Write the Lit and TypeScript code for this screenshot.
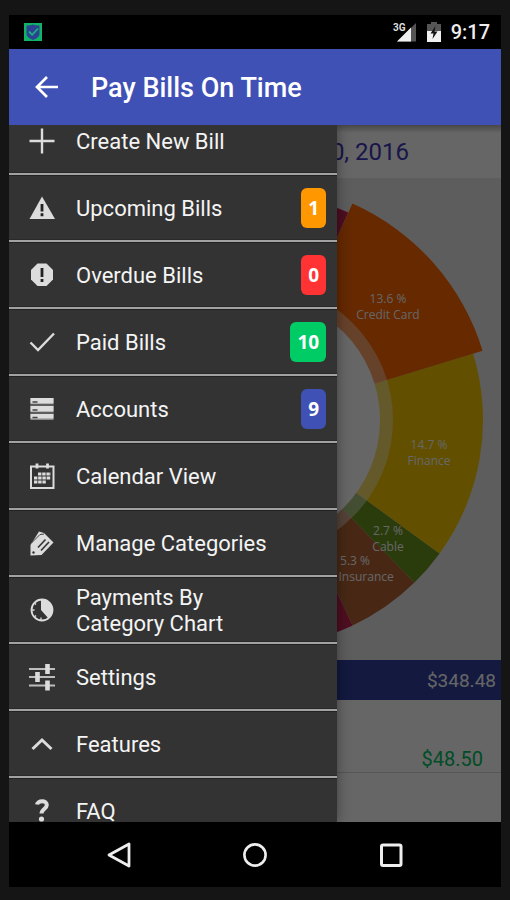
import { LitElement, html, svg, css, nothing, TemplateResult } from "lit";
import { customElement, property } from "lit/decorators.js";

type Slice = { from: number; to: number; r: number; color: string };
type SliceLabel = { x: number; y: number; lines: string[] };
type MenuItem = { icon: string; label: string; badge?: string; tone?: string };

const ICONS: Record<string, TemplateResult> = {
  plus: svg`<path d="M14 1.5v25M1.5 14h25" fill="none" stroke="currentColor" stroke-width="2.4"/>`,
  warning: svg`<path d="M14 2.5 27 25H1.5z" fill="currentColor"/><path d="M14 10v7.500M14 19.300v3" stroke="#222" stroke-width="2.800"/>`,
  alert: svg`<path d="M9.500 2.500h9l6.500 6.500v9.500L18.500 25H9.500L3 18.500V9z" fill="currentColor"/><path d="M14 7v9M14 18v3" stroke="#222" stroke-width="2.800"/>`,
  check: svg`<path d="M2.500 14.500 10 22 26 5.500" fill="none" stroke="currentColor" stroke-width="2.400"/>`,
  accounts: svg`<path d="M2.500 3h23v22h-23z" fill="#8a8a8a"/><path d="M2.500 3h23v5.500h-23zM2.500 11h23v5.500h-23zM2.500 19h23v4.500h-23z" fill="currentColor"/><path d="M4.500 7h5M4.500 15h5M4.500 22.500h5" stroke="#444" stroke-width="1.500"/><path d="M2.500 10h23M2.500 18h23" stroke="#333" stroke-width="1.200"/>`,
  calendar: svg`<path d="M3 4.500h22.500v21.500H3z" fill="none" stroke="currentColor" stroke-width="2"/><path d="M9 1.500v5M19.500 1.500v5" stroke="currentColor" stroke-width="2.800"/><path d="M10 12h13M6 16h17M6 20h12" stroke="currentColor" stroke-width="3.200" stroke-dasharray="3.400 0.800"/>`,
  tags: svg`<path d="M2.500 26.500V16L11 2.500 16 4l9.500 9.500L13.500 26z" fill="currentColor"/><path d="M3.500 14 12 5.500l4-.5" stroke="#444" stroke-width="1" fill="none"/><path d="M10 18.500l7.500-8M13 21.500l8-8.500" stroke="#333" stroke-width="1.600" fill="none"/><circle cx="5.500" cy="23.500" r="1.200" fill="#333"/>`,
  pie: svg`<circle cx="14" cy="14" r="10.500" fill="none" stroke="currentColor" stroke-width="1.800"/><path d="M13 14V3.500A10.500 10.500 0 0 1 20.500 22.500z" fill="currentColor"/><path d="M4 14h2.500M6.500 7l1.500 1.500M6.500 21l1.500-1.500M13 24v-2.500" stroke="currentColor" stroke-width="1.300"/>`,
  sliders: svg`<path d="M1 6h26M1 14h26M1 22.500h26" stroke="#bdbdbd" stroke-width="2.200"/><path d="M19.500 1v10M9.500 9v10M19.500 17.500v10" stroke="currentColor" stroke-width="4.600"/>`,
  chevron: svg`<path d="M4.500 19 14 10l9.500 9" fill="none" stroke="currentColor" stroke-width="3"/>`,
  question: svg`<path d="M9 7.500C9.500 3.500 18.800 2.500 18.800 8c0 4-5.300 4-5.300 8.500" fill="none" stroke="currentColor" stroke-width="4"/><circle cx="13.500" cy="22" r="2.600" fill="currentColor"/>`,
};

const MENU: MenuItem[] = [
  { icon: "plus", label: "Create New Bill" },
  { icon: "warning", label: "Upcoming Bills", badge: "1", tone: "orange" },
  { icon: "alert", label: "Overdue Bills", badge: "0", tone: "red" },
  { icon: "check", label: "Paid Bills", badge: "10", tone: "green" },
  { icon: "accounts", label: "Accounts", badge: "9", tone: "blue" },
  { icon: "calendar", label: "Calendar View" },
  { icon: "tags", label: "Manage Categories" },
  { icon: "pie", label: "Payments By Category Chart" },
  { icon: "sliders", label: "Settings" },
  { icon: "chevron", label: "Features" },
  { icon: "question", label: "FAQ" },
];

const CX = 247;
const CY = 242;
const SLICES: Slice[] = [
  { from: -60, to: 24, r: 227, color: "#c12552" },
  { from: 154.8, to: 200, r: 227, color: "#c12552" },
  { from: 135.7, to: 154.8, r: 227, color: "#b36435" },
  { from: 126, to: 135.7, r: 227, color: "#6a961f" },
  { from: 73, to: 126, r: 227, color: "#f5c700" },
  { from: 24, to: 73, r: 237, color: "#ff6600" },
];
const LABELS: SliceLabel[] = [
  { x: 379, y: 125, lines: ["13.6 %", "Credit Card"] },
  { x: 420, y: 271, lines: ["14.7 %", "Finance"] },
  { x: 379, y: 357, lines: ["2.7 %", "Cable"] },
  { x: 346, y: 387, lines: ["5.3 %", "Car Insurance"] },
];

function wedge(s: Slice): string {
  const pt = (deg: number) => {
    const a = (deg * Math.PI) / 180;
    return `${(CX + s.r * Math.sin(a)).toFixed(1)} ${(CY - s.r * Math.cos(a)).toFixed(1)}`;
  };
  return `M${CX} ${CY}L${pt(s.from)}A${s.r} ${s.r} 0 0 1 ${pt(s.to)}z`;
}

@customElement("menu-row")
export class MenuRow extends LitElement {
  @property() icon = "";
  @property() label = "";
  @property() badge = "";
  @property() tone = "";

  static styles = css`
    :host { display: block; }
    .row {
      display: flex; align-items: center; gap: 20px;
      width: 100%; height: 67px; box-sizing: border-box;
      padding: 1px 11px 0 19px; margin: 0;
      border: 0; border-bottom: 2px solid #a2a2a2;
      background: #333; color: #f4f4f4;
      box-shadow: inset 0 1px #222, inset 0 -1px #2a2a2a;
      font: 400 22px/26px Roboto, sans-serif; text-align: left;
    }
    .icon { width: 28px; height: 28px; flex: none; color: #dcdcdc; }
    .label { flex: 1; max-width: 200px; padding-top: 1px; }
    .badge {
      margin-left: auto; box-sizing: border-box; height: 40px; padding: 0 7px;
      border-radius: 6px; color: #fff;
      font: 700 19px/40px "Open Sans", sans-serif; text-align: center;
    }
    .orange { background: #ff9800; }
    .red { background: #ff3333; }
    .green { background: #00cc66; }
    .blue { background: #3f51b5; }
  `;

  render() {
    return html`<button class="row" type="button">
      <svg class="icon" viewBox="0 0 28 28" aria-hidden="true">${ICONS[this.icon]}</svg>
      <span class="label">${this.label}</span>
      ${this.badge ? html`<span class="badge ${this.tone}">${this.badge}</span>` : nothing}
    </button>`;
  }
}

@customElement("app-root")
export class AppRoot extends LitElement {
  static styles = css`
    :host {
      display: flex; flex-direction: column; box-sizing: border-box;
      height: 100vh; padding: 15px 9px 13px; background: #151515;
      font-family: Roboto, sans-serif;
    }
    button { border: 0; padding: 0; margin: 0; background: none; color: inherit; }
    svg { display: block; }
    .status {
      display: flex; align-items: center; height: 34px; flex: none;
      box-sizing: border-box; padding: 0 11px 0 15px; background: #000; color: #eee;
    }
    .signal { margin-left: auto; }
    .battery { margin-left: 11px; }
    .clock { margin-left: 10px; font: 500 20px/36px Roboto, sans-serif; }
    .three-g { font: 700 10px Roboto, sans-serif; }
    .appbar {
      display: flex; align-items: center; gap: 30px; height: 76px; flex: none;
      box-sizing: border-box; padding: 0 24px; background: #3f51b5; color: #fff;
    }
    .title { margin: 0; padding-top: 2px; font: 500 27px/36px Roboto, sans-serif; }
    .content { position: relative; flex: 1; min-height: 0; overflow: hidden; background: #fff; }
    .page { height: 100%; }
    .period {
      height: 53px; box-sizing: border-box; padding-right: 92px;
      font: 400 24px/54px Roboto, sans-serif; text-align: right; color: #3c38b8;
    }
    .chart { background: #e9e9e9; }
    .pie { width: 100%; height: 482px; }
    .pie-label { fill: #fff; font: 400 12px "Open Sans", sans-serif; text-anchor: middle; }
    .total {
      height: 40px; box-sizing: border-box; padding-right: 5px; background: #303f9f; color: #fff;
      font: 400 19px/42px Roboto, sans-serif; text-align: right;
    }
    .amount {
      height: 73px; box-sizing: border-box; padding: 38px 18px 0 0; border-bottom: 1px solid #d8d8d8;
      color: #00c060; font: 400 20px/42px Roboto, sans-serif; text-align: right;
    }
    .scrim {
      position: absolute; inset: 0;
      background: linear-gradient(rgba(0, 0, 0, 0.3), transparent 8px), rgba(0, 0, 0, 0.6);
    }
    .drawer {
      position: absolute; top: 0; bottom: 0; left: 0; width: 66.7%; overflow: hidden;
      background: #333; box-shadow: 0 0 12px rgba(0, 0, 0, 0.4);
    }
    .list { margin-top: -17px; }
    .nav {
      display: flex; align-items: center; justify-content: center; gap: 88px;
      height: 65px; flex: none; background: #000; color: #eee;
    }
    .nav-button { width: 48px; height: 48px; display: grid; place-items: center; }
  `;

  render() {
    return html`
      <header class="status">
        <svg width="18" height="18" viewBox="0 0 18 18" aria-hidden="true">
          <path d="M0 0h18v18H0z" fill="#10b467"/>
          <path d="M2.500 2.500Q6 2.800 9 1.500q3 1.300 6.500 1V11q0 3.500-6.500 6-6.500-2.500-6.500-6z" fill="#2b4390"/>
          <path d="M5 8.500l3.200 3.300L14 5.500" fill="none" stroke="#1fae85" stroke-width="1.800"/>
        </svg>
        <svg class="signal" width="24" height="22" viewBox="0 0 24 22" aria-label="3G signal">
          <path d="M5 20.500 24 2v18.500z" fill="#555"/>
          <path d="M5 20.500 19 6.500v14z" fill="#f0f0f0"/>
          <text class="three-g" x="1" y="10" fill="#ddd">3G</text>
        </svg>
        <svg class="battery" width="14" height="22" viewBox="0 0 14 22" aria-label="Battery charging">
          <path d="M4 1h6v2h4v8H0V3h4z" fill="#555"/>
          <path d="M0 10h14v11H0z" fill="#f0f0f0"/>
          <path d="M8.500 5 3.500 12.500h3L5.500 18l5-7.500h-3z" fill="#111"/>
        </svg>
        <span class="clock">9:17</span>
      </header>
      <div class="appbar">
        <button type="button" aria-label="Back">
          <svg width="28" height="28" viewBox="0 0 28 28">
            <path d="M25 14H4.500M14 4 4 14l10 10" fill="none" stroke="#fff" stroke-width="2.700"/>
          </svg>
        </button>
        <h1 class="title">Pay Bills On Time</h1>
      </div>
      <main class="content">
        <div class="page">
          <div class="period">30, 2016</div>
          <div class="chart">
            <svg class="pie" viewBox="0 0 492 482" role="img" aria-label="Payments by category">
              ${SLICES.map((s) => svg`<path d=${wedge(s)} fill=${s.color}/>`)}
              <circle cx=${CX} cy=${CY} r="137" fill="#fff" fill-opacity="0.42"/>
              <circle cx=${CX} cy=${CY} r="124" fill="#fff"/>
              ${LABELS.map((l) => l.lines.map((t, i) => svg`<text class="pie-label" x=${l.x} y=${l.y + i * 16}>${t}</text>`))}
            </svg>
          </div>
          <div class="total">$348.48</div>
          <div class="amount">$48.50</div>
        </div>
        <div class="scrim"></div>
        <nav class="drawer">
          <div class="list">
            ${MENU.map((m) => html`<menu-row .icon=${m.icon} .label=${m.label} .badge=${m.badge ?? ""} .tone=${m.tone ?? ""}></menu-row>`)}
          </div>
        </nav>
      </main>
      <footer class="nav">
        <button class="nav-button" type="button" aria-label="Back">
          <svg width="28" height="28" viewBox="0 0 28 28"><path d="M4 14 24 3v22z" fill="none" stroke="currentColor" stroke-width="2.800" stroke-linejoin="round"/></svg>
        </button>
        <button class="nav-button" type="button" aria-label="Home">
          <svg width="28" height="28" viewBox="0 0 28 28"><circle cx="14" cy="14" r="10.600" fill="none" stroke="currentColor" stroke-width="2.600"/></svg>
        </button>
        <button class="nav-button" type="button" aria-label="Recent apps">
          <svg width="28" height="28" viewBox="0 0 28 28"><rect x="4.500" y="4" width="19.500" height="20.500" rx="1.500" fill="none" stroke="currentColor" stroke-width="3"/></svg>
        </button>
      </footer>
    `;
  }
}
